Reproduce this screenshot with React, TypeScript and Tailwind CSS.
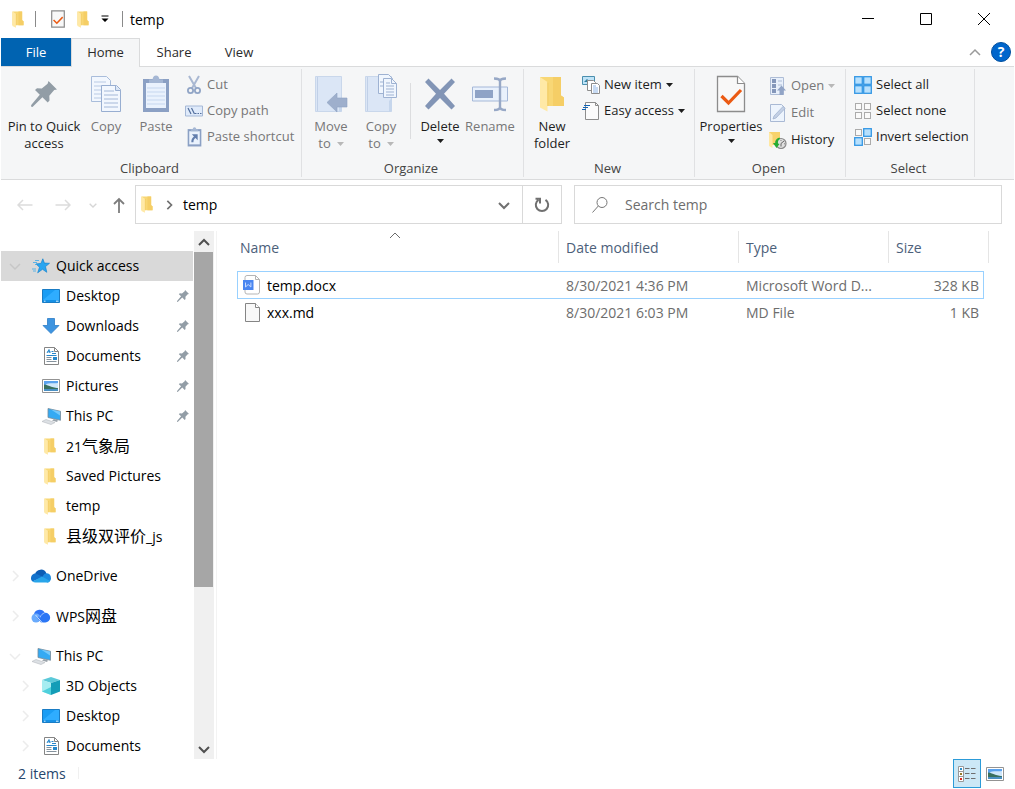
import type { ReactNode } from 'react';
import clsx from 'clsx';

/* ---------- icons ---------- */

const FolderIcon = ({ className = 'w-4 h-4' }: { className?: string }) => (
  <svg className={className} viewBox="0 0 26 36" preserveAspectRatio="none" aria-hidden="true">
    <path d="M1 1h21v18.500l3 2v8.500H1z" fill="#f8d775" />
    <path d="M22 19.500l3 2v8.500H14V1h8z" fill="#f5ce66" />
    <path d="M1 1l7.500 5v29.500L1 31.500z" fill="#ffe9a6" />
    <path d="M8.500 6v24h.8V7z" fill="#eec55a" />
  </svg>
);

const CheckDocIcon = ({ className = 'w-4 h-4', fold = true }: { className?: string; fold?: boolean }) => (
  <svg className={className} viewBox="0 0 30 38" fill="none" aria-hidden="true">
    <path
      d={fold ? 'M1.500 1.500h20l7 7v28h-27z' : 'M1.500 1.500h27v35h-27z'}
      fill="#f8f8f8"
      stroke="#8c8c8c"
      strokeWidth={fold ? 1.3 : 2.6}
    />
    {fold && <path d="M21.500 1.500v7h7" fill="#fff" stroke="#8c8c8c" strokeWidth="1.200" />}
    <path d="M5.500 21l7 7L25 15" stroke="#eb5a13" strokeWidth="3.200" />
  </svg>
);

const PinIcon = ({ className }: { className?: string }) => (
  <svg className={className} viewBox="0 0 26 26" fill="#929da6" aria-hidden="true">
    <path d="M17.500 0L26 8.500l-2.800.6-4.900 5.600.2 4.800-1.800 2-5.300-5.200L1.500 26 0 25.500l.2-1.500 8.600-10.200L4 9l2-1.800 4.800.4 5.800-4.800z" />
  </svg>
);

const CopyIcon = () => (
  <svg className="w-8 h-10" viewBox="0 0 32 40" fill="none" aria-hidden="true">
    <path d="M1.500 2.500h15l4 4v21h-19z" fill="#f2f7fe" stroke="#a9bddb" />
    <path d="M4 8h12M4 12h14M4 16h8M4 20h8M4 24h8" stroke="#b9cae4" />
    <path d="M11.500 11.500h15l4 4v22h-19z" fill="#f2f7fe" stroke="#98aed1" />
    <path d="M25.500 11.500v5h5" fill="#d9e5f5" stroke="#98aed1" />
    <path d="M14 17h10M14 21h14M14 25h14M14 29h14M14 33h14" stroke="#a4b8d8" />
  </svg>
);

const ClipboardIcon = ({ className = 'w-7 h-10', shortcut = false }: { className?: string; shortcut?: boolean }) => (
  <svg className={className} viewBox="0 0 28 38" fill="none" aria-hidden="true">
    <path d="M1 4h26v33H1z" fill="#8ba0c4" />
    <path d="M4 8h20v25H4z" fill="#eaf2fd" />
    <path d="M7 8V4.500h3.500C11 2 12 .5 14 .5s3 1.500 3.500 4H21V8z" fill="#a5b7d4" />
    {shortcut ? (
      <path d="M9 14h11v11l-4-4c-3 2-4 4-4 8H8c0-5 1-8 5-11z" fill="#637fae" />
    ) : (
      <path d="M5 13h18M5 17h18M5 21h18M5 25h18M5 29h18" stroke="#c6d7ef" />
    )}
  </svg>
);

const CutIcon = () => (
  <svg className="w-4 h-5" viewBox="0 0 16 20" fill="none" aria-hidden="true">
    <path d="M3 1l7.500 13M13 1L5.500 14" stroke="#a9b8d2" strokeWidth="2" />
    <circle cx="4.500" cy="15.500" r="2.600" stroke="#91a5c6" strokeWidth="1.800" />
    <circle cx="11.500" cy="15.500" r="2.600" stroke="#91a5c6" strokeWidth="1.800" />
  </svg>
);

const CopyPathIcon = () => (
  <svg className="w-[18px] h-3" viewBox="0 0 18 12" fill="none" aria-hidden="true">
    <path d="M.5 1h17v10H.5z" fill="#dfeafa" stroke="#a5b8d6" />
    <path d="M3 3l3 6M6.500 3l3 6" stroke="#536f9c" strokeWidth="1.200" />
    <path d="M10 8.500h1.500m1 0H14m1 0h1.500" stroke="#536f9c" />
  </svg>
);

const BookIcon = ({ copy = false }: { copy?: boolean }) => (
  <svg className="w-9 h-10" viewBox="0 0 36 40" fill="none" aria-hidden="true">
    <path d="M2.500 2.500h26v35h-26z" fill="#dbe6f6" stroke="#c9d7eb" />
    <path d="M4.500 3v34" stroke="#c1d0e7" />
    <path d="M26 27l3-3v13l-3 1z" fill="#c6d6ec" />
    {copy ? (
      <>
        <path d="M15.500.5h10l4 4v15h-14z" fill="#f0f6fe" stroke="#9eb2d2" />
        <path d="M20.500 4.500h8l5 5v14h-13z" fill="#f0f6fe" stroke="#9eb2d2" />
        <path d="M28.500 4.500v5h5M17 8h3M17 12h3M23 9h4M23 12h8M23 15h8M23 18h8M23 21h8" stroke="#9eb2d2" />
      </>
    ) : (
      <path d="M14 28.500L24 19v5h10v9H24v5z" fill="#9eafcc" stroke="#8fa2c3" strokeWidth=".600" />
    )}
  </svg>
);

const DeleteIcon = () => (
  <svg className="w-8 h-10" viewBox="0 0 32 40" aria-hidden="true">
    <path d="M1 8l3.500-3.500L16 16 27.500 4.500 31 8 20 19.800 31 32l-3.500 3.500L16 24 4.500 35.500 1 32l11-12.200z" fill="#8295b6" />
  </svg>
);

const RenameIcon = () => (
  <svg className="w-9 h-10" viewBox="0 0 36 40" fill="none" aria-hidden="true">
    <path d="M.5 13h35v14H.500z" fill="#e9f1fc" stroke="#a5b8d8" />
    <path d="M3 16h18v8H3z" fill="#8fa3c6" />
    <path d="M28 7v27M22 4.500c4 0 6 1 6 3 0-2 2-3 6-3M22 36c4 0 6-1 6-3 0 2 2 3 6 3" stroke="#97a8c6" strokeWidth="2.400" />
  </svg>
);

const NewItemIcon = () => (
  <svg className="w-[18px] h-[18px]" viewBox="0 0 18 18" fill="none" aria-hidden="true">
    <path d="M.500.5h12v8H.500z" fill="#bfe3f7" stroke="#4a8fae" />
    <path d="M2 6l3-3 3 3z" fill="#2f7f9f" />
    <path d="M5.500 4.500h6l2 2v8h-8z" fill="#fff" stroke="#8d8d8d" />
    <path d="M9.500 7.500h6l2 2v8h-8z" fill="#fff" stroke="#8d8d8d" />
    <path d="M11 10h3M11 12h5M11 14h5M11 16h5" stroke="#8fb5e6" />
  </svg>
);

const EasyAccessIcon = () => (
  <svg className="w-[18px] h-[18px]" viewBox="0 0 18 18" fill="none" aria-hidden="true">
    <path d="M3.500.5h10l3 3v14h-13z" fill="#fbfbfb" stroke="#8d8d8d" />
    <path d="M13.500.5v3h3" stroke="#8d8d8d" />
    <path d="M2 3.500h6M1 5.500h5M0 7.500h4" stroke="#1464b4" strokeWidth="1.200" />
  </svg>
);

const OpenIcon = () => (
  <svg className="w-4 h-[18px]" viewBox="0 0 16 18" fill="none" aria-hidden="true">
    <path d="M.5.5h13v17H.500z" fill="#e8f0fb" stroke="#aebdd6" />
    <path d="M2 2h4v4H2zM2 7h4v4H2zM2 12h4v4H2z" fill="#8497ba" />
    <path d="M8 4h4M8 8h4" stroke="#aebdd6" />
    <path d="M11.500 8.500L16 13.500h-2.500V18h-4v-4.500H7z" fill="#91a4c6" />
  </svg>
);

const EditIcon = () => (
  <svg className="w-4 h-[18px]" viewBox="0 0 16 18" fill="none" aria-hidden="true">
    <path d="M.5.5h11l3 3v14H.500z" fill="#edf4fd" stroke="#a9b9d4" />
    <path d="M3 15l1-3L13 2.500l2 2L6 14z" fill="#c3d0e5" stroke="#9badcb" strokeWidth=".700" />
  </svg>
);

const HistoryIcon = () => (
  <svg className="w-[18px] h-[18px]" viewBox="0 0 18 18" fill="none" aria-hidden="true">
    <path d="M0 1h11v13H3l-3-1z" fill="#f7d26c" />
    <path d="M0 1l3.500 3v13L0 15z" fill="#ffe8a3" />
    <circle cx="12" cy="12.500" r="5" fill="#dedede" stroke="#8a8a8a" strokeWidth="1.200" />
    <path d="M12 12.500l3-2.500M12 12.500v3M12 9v.8M15 12.800h.8" stroke="#666" />
    <path d="M10.500 6.500c-3.500 1-4.500 3.500-4.200 5.500H4l3.500 5 3-4-1.500-.6c-.3-2 .3-3.400 2-4.400z" fill="#25ad33" />
  </svg>
);

// four squares; `on` marks the highlighted ones
const SelectIcon = ({ on }: { on: number[] }) => (
  <svg className="w-[18px] h-[18px]" viewBox="0 0 18 18" fill="none" aria-hidden="true">
    {[[0, 0], [9, 0], [0, 9], [9, 9]].map(([x, y], i) =>
      on.includes(i) ? (
        <rect key={i} x={x + 0.7} y={y + 0.7} width="7.600" height="7.600" fill="#b7e0fd" stroke="#3497e4" strokeWidth="1.300" />
      ) : (
        <rect key={i} x={x + 1.5} y={y + 1.5} width="6" height="6" fill="#fafafa" stroke="#ababab" />
      )
    )}
  </svg>
);

const StarIcon = () => (
  <svg className="w-[18px] h-4" viewBox="0 0 18 16" aria-hidden="true">
    <path d="M10.800.8l1.600 4.300 5.100.2-4 3.300 1.300 5.700-4.300-3-4.800 3.500 1.800-5.600-3.500-3.300 5-.5z" fill="#28a5f0" stroke="#1584cf" strokeWidth=".700" />
    <path d="M3 2.500h4M1 4.500h4M3 6.500h2M0 11h4M1 13h3" stroke="#3ba9ea" strokeWidth=".800" />
  </svg>
);

const DesktopIcon = () => (
  <svg className="w-[18px] h-[14px]" viewBox="0 0 18 14" aria-hidden="true">
    <path d="M.5.500h17v13H.500z" fill="#1a9df4" stroke="#1a7cc4" />
    <path d="M1 11L13 1h4v10z" fill="#2fadff" />
    <path d="M1 12h16" stroke="#1384d6" />
    <path d="M2 12.200h1.500M14 12.200h2.500" stroke="#d9f0ff" />
  </svg>
);

const DownloadsIcon = () => (
  <svg className="w-[18px] h-4" viewBox="0 0 18 16" aria-hidden="true">
    <path d="M5.500.5h7v7h4.500L9 15.500 1 7.500h4.500z" fill="#3d94e0" stroke="#2b7cc6" strokeWidth=".800" />
  </svg>
);

const DocumentsIcon = () => (
  <svg className="w-[15px] h-[18px]" viewBox="0 0 15 18" fill="none" aria-hidden="true">
    <path d="M.5.5h10l4 4v13H.500z" fill="#fff" stroke="#858585" />
    <path d="M10.500.5v4h4" stroke="#858585" />
    <path d="M3 6l2-3.500L6 6M3.500 4.800h3M7.500 4.500h2M8 6.500h4" stroke="#2787cb" />
    <path d="M2.500 8.500h10" stroke="#2787cb" />
    <path d="M2.500 10.500h5M2.500 12.500h5M2.500 14.500h10" stroke="#85929d" />
    <path d="M9 10h4v3H9z" fill="#2787cb" />
  </svg>
);

const PicturesIcon = () => (
  <svg className="w-[18px] h-[14px]" viewBox="0 0 18 14" aria-hidden="true">
    <path d="M.5.500h17v13H.500z" fill="#fff" stroke="#939393" />
    <path d="M2 2h14v10H2z" fill="#5aa2ee" />
    <path d="M4 5c4-1.500 8 0 12-1v5H6z" fill="#cfe7fb" />
    <path d="M2 5.500c3 0 7 3 14 3.700V10H2z" fill="#39705f" />
    <path d="M2 10h14v2H2z" fill="#4a90c4" />
  </svg>
);

const PcIcon = () => (
  <svg className="w-[19px] h-[17px]" viewBox="0 0 19 17" aria-hidden="true">
    <path d="M6 .5l12.500 2.800v9L6 9.500z" fill="#35aaf3" stroke="#7a8b98" strokeWidth=".800" />
    <path d="M9 1.500l9 2v4z" fill="#76c9fb" />
    <path d="M12 11l4 1.500-1 1.500-5-1.500z" fill="#9aa3aa" />
    <path d="M0 13.500l4-2 9 3-4 2z" fill="#dce0e4" stroke="#b5babf" strokeWidth=".600" />
  </svg>
);

const OneDriveIcon = () => (
  <svg className="w-5 h-[14px]" viewBox="0 0 20 14" aria-hidden="true">
    <path d="M4 5.500A6 6 0 0 1 15.500 4.500L12 9z" fill="#0c5db5" />
    <path d="M4.500 4.500C1.500 4.500 0 7 0 9.300 0 11 .8 12 1.500 12.600L12.500 8z" fill="#1272cc" />
    <path d="M11.500 8c1-2.700 2.500-3.700 4.500-3.700 2.500.2 4 2.200 4 5C20 12 18 13.500 16 13.500z" fill="#1c8ae0" />
    <path d="M1.500 12.600L11 7.500l8 4.500c-.8 1-1.900 1.500-3 1.500H4.500c-1.300 0-2.300-.3-3-.9z" fill="#28a5ea" />
  </svg>
);

const WpsIcon = () => (
  <svg className="w-5 h-[14px]" viewBox="0 0 20 14" aria-hidden="true">
    <path d="M3 5A5.800 5.800 0 0 1 13.800 4L9 9z" fill="#2f74f6" />
    <circle cx="5" cy="9" r="4.500" fill="#6aabfc" />
    <path d="M9 7.500c1-2.500 3-3.700 5.300-3.700a4.800 4.800 0 0 1 0 9.700H10L5.500 8z" fill="#2b76f5" />
    <path d="M4.500 6l7 8" stroke="#d5e6ff" strokeWidth=".900" />
    <path d="M9 8.500c.8-2.500 2.500-4 4.500-4.500" stroke="#a9cbff" strokeWidth=".900" fill="none" />
  </svg>
);

const CubeIcon = () => (
  <svg className="w-[18px] h-[18px]" viewBox="0 0 18 18" aria-hidden="true">
    <path d="M0 3l9-3 9 3-9 3z" fill="#5bc9d9" />
    <path d="M0 3l9 3v12l-9-3.500z" fill="#a6edf1" />
    <path d="M18 3L9 6v12l9-3.500z" fill="#139db7" />
    <path d="M0 14.500L9 10v8z" fill="#4fd0dc" />
  </svg>
);

const WordIcon = () => (
  <svg className="w-[18px] h-5" viewBox="0 0 18 20" fill="none" aria-hidden="true">
    <path d="M4 .5h8.500l4 4V17a2 2 0 0 1-2 2H4a2 2 0 0 1-2-2V2.500a2 2 0 0 1 2-2z" fill="#fff" stroke="#b5b5b5" />
    <path d="M12.500.5v4h4" stroke="#b5b5b5" />
    <path d="M0 5h10.500v10H0z" fill="#4a86f0" />
    <path d="M2.500 7.500v4.500l2.700-2.500 2.700 2.500V7.500" stroke="#c8dbff" />
  </svg>
);

const FileIcon = () => (
  <svg className="w-[15px] h-[19px]" viewBox="0 0 15 19" fill="none" aria-hidden="true">
    <path d="M.5.5h10l4 4v14H.500z" fill="#f8f8f8" stroke="#858585" />
    <path d="M10.500.5v4h4" fill="#fff" stroke="#858585" />
  </svg>
);

const Chevron = ({ dir, className }: { dir: 'up' | 'down' | 'right'; className?: string }) => (
  <svg className={className} viewBox="0 0 12 12" fill="none" stroke="currentColor" aria-hidden="true">
    {dir === 'up' && <path d="M1 9l5-5 5 5" />}
    {dir === 'down' && <path d="M1 4l5 5 5-5" />}
    {dir === 'right' && <path d="M4 1l5 5-5 5" />}
  </svg>
);

const Caret = ({ className }: { className?: string }) => (
  <svg className={clsx('w-[7px] h-1', className)} viewBox="0 0 7 4" fill="currentColor" aria-hidden="true">
    <path d="M0 0h7L3.500 4z" />
  </svg>
);

/* ---------- ribbon ---------- */

interface ButtonProps {
  icon: ReactNode;
  children: ReactNode;
  disabled?: boolean;
  className?: string;
}

const BigButton = ({ icon, children, disabled, className = 'w-[50px]' }: ButtonProps) => (
  <button
    type="button"
    disabled={disabled}
    className={clsx(
      'flex flex-col items-center self-start shrink-0 pt-[7px] leading-[17px] whitespace-nowrap',
      disabled ? 'text-[#777]' : 'text-[#1e1e1e]',
      className
    )}
  >
    <span className="flex h-10 items-center justify-center mb-1">{icon}</span>
    {children}
  </button>
);

const SmallButton = ({ icon, children, disabled, className = 'h-[26px]' }: ButtonProps) => (
  <button
    type="button"
    disabled={disabled}
    className={clsx('flex items-center gap-1 whitespace-nowrap', disabled ? 'text-[#777]' : 'text-[#1e1e1e]', className)}
  >
    <span className="flex w-[18px] justify-center">{icon}</span>
    {children}
  </button>
);

const Group = ({ label, className, children }: { label: string; className: string; children: ReactNode }) => (
  <section aria-label={label} className={clsx('flex flex-col shrink-0 relative', className)}>
    <div className="flex flex-1">{children}</div>
    <div className="h-[22px] pr-1 text-center leading-[22px] text-[#444]">{label}</div>
    <span className="absolute right-0 top-0.5 bottom-0.5 w-px bg-[#e0e1e3]" />
  </section>
);

const Ribbon = () => (
  <div className="flex h-[113px] shrink-0 bg-[#f5f6f7] border-b border-[#dadbdc] mx-px text-[13px]">
    <Group label="Clipboard" className="w-[301px]">
      <BigButton className="ml-1.5 w-[74px]" icon={<PinIcon className="w-[26px] h-[26px]" />}>
        <span>Pin to Quick</span>
        <span>access</span>
      </BigButton>
      <BigButton disabled icon={<CopyIcon />}>Copy</BigButton>
      <BigButton disabled icon={<ClipboardIcon />}>Paste</BigButton>
      <div className="ml-1 pt-[5px]">
        <SmallButton disabled icon={<CutIcon />}>Cut</SmallButton>
        <SmallButton disabled icon={<CopyPathIcon />}>Copy path</SmallButton>
        <SmallButton disabled icon={<ClipboardIcon className="w-[15px] h-5" shortcut />}>Paste shortcut</SmallButton>
      </div>
    </Group>

    <Group label="Organize" className="w-[222px]">
      <BigButton className="ml-1 w-[50px]" disabled icon={<BookIcon />}>
        <span>Move</span>
        <span className="flex items-center gap-1.5">to <Caret className="text-[#b8b8b8]" /></span>
      </BigButton>
      <BigButton disabled icon={<BookIcon copy />}>
        <span>Copy</span>
        <span className="flex items-center gap-1.5">to <Caret className="text-[#b8b8b8]" /></span>
      </BigButton>
      <span className="w-px h-14 mt-4 mx-1 bg-[#dcdddf]" />
      <BigButton icon={<DeleteIcon />}>
        <span>Delete</span>
        <Caret className="mt-1" />
      </BigButton>
      <BigButton disabled icon={<RenameIcon />}>Rename</BigButton>
    </Group>

    <Group label="New" className="w-[171px]">
      <BigButton className="ml-[3px] w-[50px]" icon={<FolderIcon className="w-[26px] h-9" />}>
        <span>New</span>
        <span>folder</span>
      </BigButton>
      <div className="ml-[5px] pt-[5px]">
        <SmallButton icon={<NewItemIcon />}>New item <Caret /></SmallButton>
        <SmallButton icon={<EasyAccessIcon />}>Easy access <Caret /></SmallButton>
      </div>
    </Group>

    <Group label="Open" className="w-[151px]">
      <BigButton className="ml-[3px] w-[66px]" icon={<CheckDocIcon className="w-[30px] h-[38px]" />}>
        <span>Properties</span>
        <Caret className="mt-1" />
      </BigButton>
      <div className="ml-[5px] pt-[5px]">
        <SmallButton className="h-[27px]" disabled icon={<OpenIcon />}>Open <Caret className="text-[#b8b8b8]" /></SmallButton>
        <SmallButton className="h-[27px]" disabled icon={<EditIcon />}>Edit</SmallButton>
        <SmallButton className="h-[27px]" icon={<HistoryIcon />}>History</SmallButton>
      </div>
    </Group>

    <Group label="Select" className="w-[129px]">
      <div className="ml-2 pt-[5px]">
        <SmallButton icon={<SelectIcon on={[0, 1, 2, 3]} />}>Select all</SmallButton>
        <SmallButton icon={<SelectIcon on={[]} />}>Select none</SmallButton>
        <SmallButton icon={<SelectIcon on={[1, 2]} />}>Invert selection</SmallButton>
      </div>
    </Group>
  </div>
);

/* ---------- header ---------- */

const TitleBar = () => (
  <header className="flex h-[38px] shrink-0 items-center pl-3">
    <FolderIcon className="w-3 h-[17px]" />
    <span className="w-px h-4 ml-[11px] mr-[15px] bg-[#8a8a8a]" />
    <button type="button" aria-label="Properties">
      <CheckDocIcon className="w-[14px] h-[18px]" fold={false} />
    </button>
    <button type="button" aria-label="New folder" className="ml-3">
      <FolderIcon className="w-3 h-[17px]" />
    </button>
    <button type="button" aria-label="Customize toolbar" className="ml-3">
      <svg className="w-2 h-2" viewBox="0 0 8 8">
        <path d="M.500.500h7v1h-7zM.500 3.500h7L4 7z" />
      </svg>
    </button>
    <span className="w-px h-4 ml-[13px] mr-[7px] bg-[#8a8a8a]" />
    <h1 className="flex-1">temp</h1>
    <div className="flex h-full pr-0.5">
      <button type="button" aria-label="Minimize" className="flex w-[58px] items-center justify-center">
        <svg className="w-3 h-3" viewBox="0 0 12 12"><path d="M0 5h12v1H0z" /></svg>
      </button>
      <button type="button" aria-label="Maximize" className="flex w-[58px] items-center justify-center">
        <svg className="w-3 h-3" viewBox="0 0 12 12" fill="none" stroke="#000"><path d="M.5.5h11v11H.5z" /></svg>
      </button>
      <button type="button" aria-label="Close" className="flex w-[58px] items-center justify-center">
        <svg className="w-3 h-3" viewBox="0 0 12 12" fill="none" stroke="#000"><path d="M0 0l12 12M12 0L0 12" /></svg>
      </button>
    </div>
  </header>
);

const Tabs = () => (
  <nav className="flex h-[29px] shrink-0 mx-px border-b border-[#dadbdc] text-[13px] text-[#2b2b2b]">
    <button type="button" className="w-[70px] pt-px bg-[#0063b1] text-white">File</button>
    <button type="button" className="w-[69px] -mb-px bg-[#f5f6f7] border border-b-0 border-[#dadbdc]">Home</button>
    <button type="button" className="w-[68px] pt-px">Share</button>
    <button type="button" className="w-[62px] pt-px">View</button>
    <div className="flex flex-1 items-center justify-end gap-2.5 pr-[3px]">
      <button type="button" aria-label="Collapse ribbon" className="text-[#9a9a9a]">
        <Chevron dir="up" className="w-3 h-3 stroke-[1.500]" />
      </button>
      <button
        type="button"
        aria-label="Help"
        className="w-5 h-5 rounded-full bg-[#0066cc] border border-[#004f9e] text-white text-[14px] leading-[18px] font-bold"
      >
        ?
      </button>
    </div>
  </nav>
);

const AddressBar = () => (
  <div className="flex h-[51px] shrink-0 pt-[5px] pb-[7px] pr-[13px] gap-3">
    <div className="flex flex-1">
      <div className="flex w-[135px] shrink-0 items-center pl-[17px]">
        <button type="button" aria-label="Back" disabled className="text-[#dcdcdc]">
          <svg className="w-4 h-4" viewBox="0 0 16 16" fill="none" stroke="currentColor" strokeWidth="1.500"><path d="M15.500 8H1M6 3L1 8l5 5" /></svg>
        </button>
        <button type="button" aria-label="Forward" disabled className="ml-[22px] text-[#dcdcdc]">
          <svg className="w-4 h-4" viewBox="0 0 16 16" fill="none" stroke="currentColor" strokeWidth="1.500"><path d="M.5 8H15M10 3l5 5-5 5" /></svg>
        </button>
        <button type="button" aria-label="Recent locations" className="ml-[18px] text-[#d6d6d6]">
          <Chevron dir="down" className="w-2 h-2 stroke-2" />
        </button>
        <button type="button" aria-label="Up" className="ml-4 text-[#7d7d7d]">
          <svg className="w-3 h-4" viewBox="0 0 12 16" fill="none" stroke="currentColor" strokeWidth="1.800"><path d="M6 16V2M1 7l5-5 5 5" /></svg>
        </button>
      </div>
      <div className="flex flex-1 items-center border border-[#d9d9d9] pl-[5px]">
        <FolderIcon className="w-3 h-[17px]" />
        <Chevron dir="right" className="w-2.5 h-2.5 ml-[11px] text-[#707070] stroke-2" />
        <button type="button" className="ml-[9px]">temp</button>
        <button type="button" aria-label="Previous locations" className="ml-auto mr-3 text-[#707070]">
          <Chevron dir="down" className="w-3 h-3 stroke-2" />
        </button>
        <button type="button" aria-label="Refresh" className="flex w-[39px] h-full items-center justify-center border-l border-[#d9d9d9] text-[#707070]">
          <svg className="w-4 h-4" viewBox="0 0 16 16" fill="none" stroke="currentColor" strokeWidth="2">
            <path d="M11.500 2.800A6.200 6.200 0 1 1 4.500 2.800M1.500 1.800H6V6.500" />
          </svg>
        </button>
      </div>
    </div>
    <label className="flex w-[428px] items-center border border-[#d9d9d9] pl-[17px]">
      <svg className="w-4 h-4 shrink-0" viewBox="0 0 16 16" fill="none" stroke="#777">
        <circle cx="10" cy="5.500" r="5" />
        <path d="M6.300 9L.5 15.500" />
      </svg>
      <input
        type="search"
        aria-label="Search temp"
        placeholder="Search temp"
        className="flex-1 min-w-0 ml-[17px] outline-none placeholder:text-[#6d6d6d]"
      />
    </label>
  </div>
);

/* ---------- navigation pane ---------- */

interface NavItem {
  label: string;
  icon: ReactNode;
  level?: number;
  arrow?: 'down' | 'right';
  pinned?: boolean;
  selected?: boolean;
}

const folder = <FolderIcon className="w-3 h-[17px]" />;

const navGroups: NavItem[][] = [
  [
    { label: 'Quick access', icon: <StarIcon />, arrow: 'down', selected: true },
    { label: 'Desktop', icon: <DesktopIcon />, level: 1, pinned: true },
    { label: 'Downloads', icon: <DownloadsIcon />, level: 1, pinned: true },
    { label: 'Documents', icon: <DocumentsIcon />, level: 1, pinned: true },
    { label: 'Pictures', icon: <PicturesIcon />, level: 1, pinned: true },
    { label: 'This PC', icon: <PcIcon />, level: 1, pinned: true },
    { label: '21气象局', icon: folder, level: 1 },
    { label: 'Saved Pictures', icon: folder, level: 1 },
    { label: 'temp', icon: folder, level: 1 },
    { label: '县级双评价_js', icon: folder, level: 1 },
  ],
  [{ label: 'OneDrive', icon: <OneDriveIcon />, arrow: 'right' }],
  [{ label: 'WPS网盘', icon: <WpsIcon />, arrow: 'right' }],
  [
    { label: 'This PC', icon: <PcIcon />, arrow: 'down' },
    { label: '3D Objects', icon: <CubeIcon />, level: 1, arrow: 'right' },
    { label: 'Desktop', icon: <DesktopIcon />, level: 1, arrow: 'right' },
    { label: 'Documents', icon: <DocumentsIcon />, level: 1, arrow: 'right' },
  ],
];

// Chinese runs are set a little larger than the Latin text around them
const Label = ({ text }: { text: string }) => (
  <span className="flex-1 whitespace-nowrap leading-[30px]">
    {text.split(/([\u4e00-\u9fff]+)/).map((part, i) =>
      i % 2 ? <span key={i} className="text-[16px]">{part}</span> : part
    )}
  </span>
);

const NavRow = ({ label, icon, level, arrow, pinned, selected }: NavItem) => (
  <li>
    <a
      href="#"
      className={clsx('flex h-[30px] items-center pr-1', level ? 'pl-4' : 'pl-1.5', selected && 'bg-[#d9d9d9]')}
    >
      <span className={clsx('flex w-4 justify-center mr-2', selected ? 'text-[#c6c6c6]' : 'text-[#ececec]')}>
        {arrow && <Chevron dir={arrow} className="w-3 h-3 stroke-[1.500]" />}
      </span>
      <span className={clsx('flex w-5 mr-[5px]', icon === folder ? 'pl-[3px]' : 'justify-center')}>{icon}</span>
      <Label text={label} />
      {pinned && <PinIcon className="w-3 h-3" />}
    </a>
  </li>
);

const Sidebar = () => (
  <aside className="flex w-[217px] shrink-0 pl-px pr-0.5 border-r border-[#f3f3f3]">
    <div className="flex-1 overflow-hidden pt-5">
      {navGroups.map((group, i) => (
        <ul key={i} className="mb-2.5">
          {group.map((item) => (
            <NavRow key={item.label} {...item} />
          ))}
        </ul>
      ))}
    </div>
    <div className="flex w-5 flex-col ml-px bg-[#f0f0f0] text-[#505050]">
      <button type="button" aria-label="Scroll up" className="flex h-[21px] items-center justify-center">
        <Chevron dir="up" className="w-3 h-3 stroke-2" />
      </button>
      <div className="flex-1 pr-px">
        <div className="h-[69%] bg-[#a6a6a6]" />
      </div>
      <button type="button" aria-label="Scroll down" className="flex h-[21px] items-center justify-center">
        <Chevron dir="down" className="w-3 h-3 stroke-2" />
      </button>
    </div>
  </aside>
);

/* ---------- file list ---------- */

const files = [
  { name: 'temp.docx', date: '8/30/2021 4:36 PM', type: 'Microsoft Word D...', size: '328 KB', icon: <WordIcon />, focused: true },
  { name: 'xxx.md', date: '8/30/2021 6:03 PM', type: 'MD File', size: '1 KB', icon: <FileIcon />, focused: false },
];

const FileList = () => (
  <main className="flex-1 overflow-hidden pl-5">
    <table className="w-[747px] table-fixed border-separate border-spacing-0">
      <thead className="text-left text-[#4c607a]">
        <tr>
          <th className="relative w-[322px] h-10 p-0 align-top font-normal">
            <div className="h-8 leading-[34px] pl-[3px] border-r border-[#e5e5e5]">Name</div>
            <Chevron dir="up" className="absolute left-[152px] -top-0.5 w-3 h-3 text-[#6b6b6b]" />
          </th>
          <th className="w-[180px] p-0 align-top font-normal">
            <div className="h-8 leading-[34px] pl-[7px] border-r border-[#e5e5e5]">Date modified</div>
          </th>
          <th className="w-[150px] p-0 align-top font-normal">
            <div className="h-8 leading-[34px] pl-[7px] border-r border-[#e5e5e5]">Type</div>
          </th>
          <th className="p-0 align-top font-normal">
            <div className="h-8 leading-[34px] pl-[7px] -mr-[5px] border-r border-[#e5e5e5]">Size</div>
          </th>
        </tr>
      </thead>
      <tbody className="text-[#6d6d6d]">
        {files.map((file) => {
          const line = clsx('p-0', file.focused ? 'h-7 border-y border-[#99d1ff]' : 'h-[26px] border-transparent');
          return (
            <tr key={file.name}>
              <td className={clsx(line, 'border-l')}>
                <div className="flex items-center pl-[5px] text-black">
                  <span className="flex w-[18px] justify-center mr-1.5">{file.icon}</span>
                  {file.name}
                </div>
              </td>
              <td className={clsx(line, 'pl-[7px]')}>{file.date}</td>
              <td className={clsx(line, 'pl-[7px]')}>{file.type}</td>
              <td className={clsx(line, 'border-r pr-1 text-right')}>{file.size}</td>
            </tr>
          );
        })}
      </tbody>
    </table>
  </main>
);

const StatusBar = () => (
  <footer className="flex h-[30px] shrink-0 items-start pl-[18px] pr-[11px] text-[#26466d]">
    <span className="leading-[30px] pr-3">2 items</span>
    <span className="w-px h-3 mt-2 bg-[#f0f0f0]" />
    <div className="flex items-center ml-auto gap-[5px]">
      <button type="button" aria-label="Details view" className="flex w-7 h-[29px] items-center justify-center bg-[#cce8f6] border border-[#2c9bd8]">
        <svg className="w-5 h-4" viewBox="0 0 20 16" fill="none">
          <path d="M1.500.5h5v15h-5zM1.500 5.500h5M1.500 10.500h5" fill="#fff" stroke="#999" />
          <path d="M3 2h2v2H3z" fill="#2b8fc8" />
          <path d="M3 7h2v2H3z" fill="#977d2c" />
          <path d="M3 12h2v2H3z" fill="#da2a1d" />
          <path d="M8 2.500h4.500M14 2.500h4.500M8 7.500h4.500M14 7.500h4.500M8 12.500h4.500M14 12.500h4.500" stroke="#6f6f6f" />
        </svg>
      </button>
      <button type="button" aria-label="Large thumbnails view">
        <PicturesIcon />
      </button>
    </div>
  </footer>
);

export default function App() {
  return (
    <div className="flex h-screen flex-col overflow-hidden bg-white text-black text-[14px] font-['Open_Sans','Noto_Sans_CJK_SC',sans-serif]">
      <TitleBar />
      <Tabs />
      <Ribbon />
      <AddressBar />
      <div className="flex flex-1 min-h-0">
        <Sidebar />
        <FileList />
      </div>
      <StatusBar />
    </div>
  );
}
